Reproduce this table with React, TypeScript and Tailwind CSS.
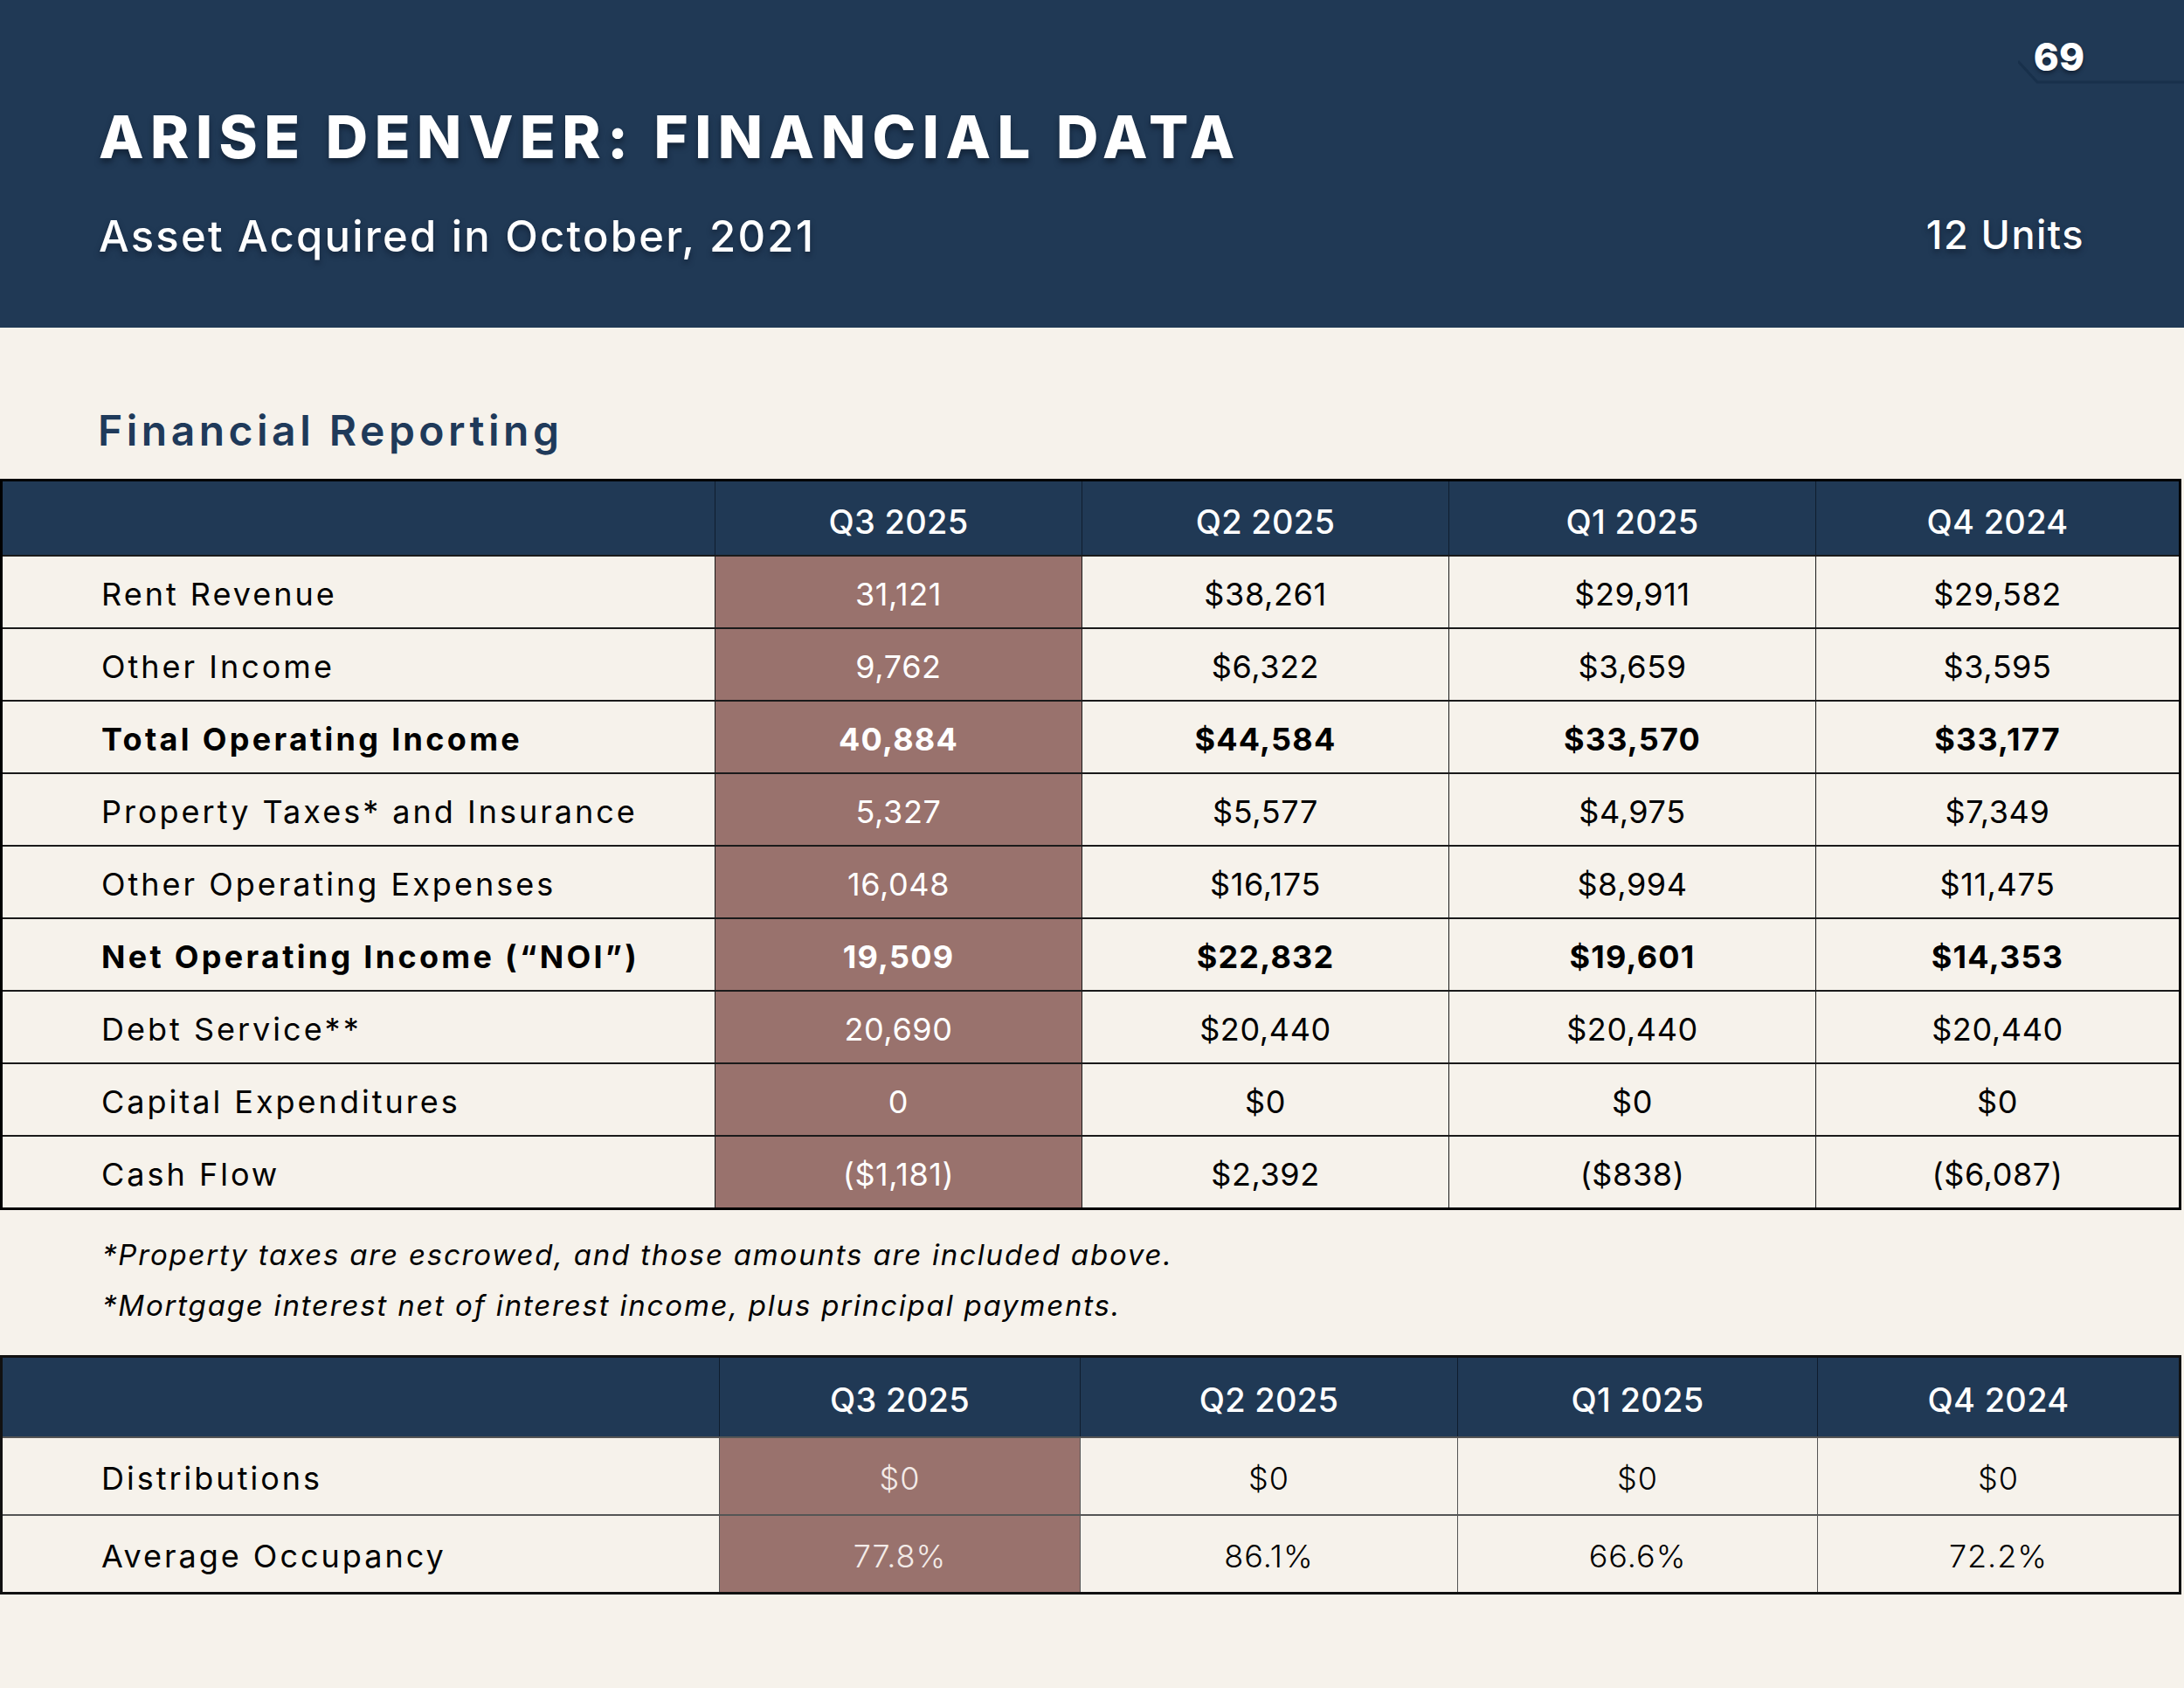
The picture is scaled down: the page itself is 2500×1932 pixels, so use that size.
import React from "react"

type Row = { label: string; values: string[]; bold?: boolean }

const quarters = ["Q3 2025", "Q2 2025", "Q1 2025", "Q4 2024"]

const finRows: Row[] = [
  { label: "Rent Revenue", values: ["31,121", "$38,261", "$29,911", "$29,582"] },
  { label: "Other Income", values: ["9,762", "$6,322", "$3,659", "$3,595"] },
  { label: "Total Operating Income", values: ["40,884", "$44,584", "$33,570", "$33,177"], bold: true },
  { label: "Property Taxes* and Insurance", values: ["5,327", "$5,577", "$4,975", "$7,349"] },
  { label: "Other Operating Expenses", values: ["16,048", "$16,175", "$8,994", "$11,475"] },
  { label: "Net Operating Income (“NOI”)", values: ["19,509", "$22,832", "$19,601", "$14,353"], bold: true },
  { label: "Debt Service**", values: ["20,690", "$20,440", "$20,440", "$20,440"] },
  { label: "Capital Expenditures", values: ["0", "$0", "$0", "$0"] },
  { label: "Cash Flow", values: ["($1,181)", "$2,392", "($838)", "($6,087)"] },
]

const distRows: Row[] = [
  { label: "Distributions", values: ["$0", "$0", "$0", "$0"] },
  { label: "Average Occupancy", values: ["77.8%", "86.1%", "66.6%", "72.2%"] },
]

const font = "font-['Inter','Noto_Sans',sans-serif]"

export default function App() {
  return (
    <div className={`w-[2500px] h-[1932px] bg-[#f6f2eb] ${font} overflow-hidden`}>
      {/* Header band */}
      <header className="relative h-[375px] bg-[#203955] text-white">
        <div className="pl-[113px] pt-[112px]">
          <h1 className="text-[67px] leading-[90px] font-extrabold tracking-[7.5px] [text-shadow:0_5px_6px_rgba(10,20,35,0.55)]">
            ARISE DENVER: FINANCIAL DATA
          </h1>
          <p className="mt-[39px] text-[49px] leading-[60px] font-medium tracking-[2.2px] [text-shadow:0_4px_6px_rgba(10,20,35,0.5)]">
            Asset Acquired in October, 2021
          </p>
        </div>

        {/* page tab */}
        <svg className="absolute right-0 top-[66px]" width="190" height="34" viewBox="0 0 190 34">
          <path d="M0 4 L22 28 L190 28" fill="none" stroke="#18304b" strokeWidth="3" />
        </svg>
        <span className="absolute right-[114px] top-[38px] text-[44px] leading-[54px] font-extrabold [text-shadow:0_3px_4px_rgba(10,20,35,0.6)]">
          69
        </span>
        <span className="absolute right-[114px] top-[241px] text-[45px] leading-[56px] font-medium tracking-[1.5px] [text-shadow:0_4px_6px_rgba(10,20,35,0.5)]">
          12 Units
        </span>
      </header>

      {/* Section title */}
      <h2 className="pl-[112px] pt-[88px] h-[173px] text-[48px] leading-[60px] font-semibold text-[#1f3a5a] tracking-[4.5px]">
        Financial Reporting
      </h2>

      {/* Financial table */}
      <div className="w-[2497px] border-[3px] border-black">
        <div className="grid grid-cols-[815px_420px_420px_420px_1fr] h-[84px] bg-[#203955] text-white">
          <div />
          {quarters.map((q) => (
            <div key={q} className="flex items-center justify-center pt-[9px] border-l border-[#0f1d2e] text-[38px] font-medium tracking-[0.3px]">
              {q}
            </div>
          ))}
        </div>
        {finRows.map((r) => (
          <div
            key={r.label}
            className={`grid grid-cols-[815px_420px_420px_420px_1fr] h-[83px] border-t-2 border-[#1a1a1a] text-[36px] text-black ${r.bold ? "font-bold" : "font-normal"}`}
          >
            <div className={`flex items-center pt-[5px] pl-[113px] ${r.bold ? "tracking-[3.3px]" : "tracking-[3px]"}`}>{r.label}</div>
            {r.values.map((v, i) => (
              <div
                key={i}
                className={`flex items-center justify-center pt-[5px] border-l border-[#1a1a1a] ${r.bold ? "tracking-[1.2px]" : "tracking-[0.6px]"} ${i === 0 ? "bg-[#99726d] text-white" : ""}`}
              >
                {v}
              </div>
            ))}
          </div>
        ))}
      </div>

      {/* Footnotes */}
      <div className="pl-[117px] pt-[22px] h-[166px] text-[33px] italic text-black leading-[58px] tracking-[1.8px]">
        <p>*Property taxes are escrowed, and those amounts are included above.</p>
        <p>*Mortgage interest net of interest income, plus principal payments.</p>
      </div>

      {/* Distributions table */}
      <div className="w-[2497px] border-[3px] border-[#111]">
        <div className="grid grid-cols-[820px_413px_432px_412px_1fr] h-[90px] bg-[#203955] text-white">
          <div />
          {quarters.map((q) => (
            <div key={q} className="flex items-center justify-center pt-[6px] border-l border-[#0f1d2e] text-[38px] font-medium tracking-[0.3px]">
              {q}
            </div>
          ))}
        </div>
        {distRows.map((r) => (
          <div
            key={r.label}
            className="grid grid-cols-[820px_413px_432px_412px_1fr] h-[89px] border-t-2 border-[#555] text-[36px] text-black"
          >
            <div className="flex items-center pt-[4px] pl-[113px] tracking-[3px]">{r.label}</div>
            {r.values.map((v, i) => (
              <div
                key={i}
                className={`flex items-center justify-center pt-[4px] border-l border-[#555] font-light tracking-[1px] ${i === 0 ? "bg-[#99726d] text-[#f3ebe8]" : ""}`}
              >
                {v}
              </div>
            ))}
          </div>
        ))}
      </div>
    </div>
  )
}
